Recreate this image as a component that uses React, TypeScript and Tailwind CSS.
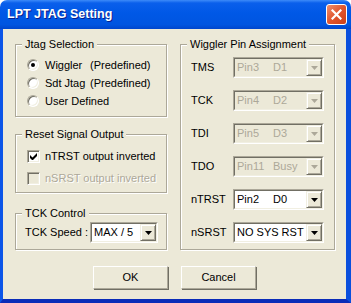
import React from "react";

const FONT = { fontFamily: '"Liberation Sans", Arial, sans-serif' };

function Arrow({ disabled }: { disabled?: boolean }) {
  return (
    <svg width="7" height="4" viewBox="0 0 7 4">
      <path d="M0 0H7L3.5 4Z" fill={disabled ? "#ACA899" : "#000"} />
    </svg>
  );
}

function Select({
  a,
  b,
  disabled,
  wide,
}: {
  a: string;
  b?: string;
  disabled?: boolean;
  wide?: boolean;
}) {
  return (
    <div
      className={
        wide
          ? "flex h-[21px] w-[91px] border border-t-[#ACA899] border-l-[#ACA899] border-b-white border-r-white"
          : "flex h-[21px] w-[68px] border border-t-[#ACA899] border-l-[#ACA899] border-b-white border-r-white"
      }
    >
      <div
        className={
          disabled
            ? "flex flex-1 items-stretch border border-t-[#716F64] border-l-[#716F64] border-b-[#F1EFE2] border-r-[#F1EFE2] bg-[#ECE9D8]"
            : "flex flex-1 items-stretch border border-t-[#716F64] border-l-[#716F64] border-b-[#F1EFE2] border-r-[#F1EFE2] bg-white"
        }
      >
        <div
          className={
            disabled
              ? "flex flex-1 items-center pl-[2px] text-[11px] leading-none text-[#ACA899] whitespace-pre"
              : "flex flex-1 items-center pl-[2px] text-[11px] leading-none text-black whitespace-pre"
          }
        >
          {b !== undefined ? (
            <>
              <span className="inline-block w-[36px]">{a}</span>
              <span>{b}</span>
            </>
          ) : (
            <span>{a}</span>
          )}
        </div>
        <div className="flex w-[16px] items-center justify-center border border-t-[#F1EFE2] border-l-[#F1EFE2] border-r-[#716F64] border-b-[#716F64] bg-[#ECE9D8] shadow-[inset_1px_1px_0_#fff,inset_-1px_-1px_0_#ACA899]">
          <Arrow disabled={disabled} />
        </div>
      </div>
    </div>
  );
}

function Group({
  label,
  className,
  children,
}: {
  label: string;
  className: string;
  children: React.ReactNode;
}) {
  return (
    <div
      className={
        "relative border border-[#ACA899] shadow-[inset_1px_1px_0_#fff,1px_1px_0_#fff] " +
        className
      }
    >
      <div className="absolute left-[6px] top-[-7px] bg-[#ECE9D8] px-[3px] text-[11px] leading-[13px] text-black">
        {label}
      </div>
      {children}
    </div>
  );
}

function Radio({ checked, a, b }: { checked?: boolean; a: string; b?: string }) {
  return (
    <div className="flex h-[18px] items-center">
      <div className="flex h-[12px] w-[12px] items-center justify-center rounded-full border border-t-[#ACA899] border-l-[#ACA899] border-b-white border-r-white bg-white shadow-[inset_1px_1px_0_#716F64,inset_-1px_-1px_0_#F1EFE2]">
        {checked && <div className="h-[4px] w-[4px] rounded-full bg-black" />}
      </div>
      <div className="ml-[6px] text-[11px] leading-none whitespace-pre">
        {b !== undefined ? (
          <>
            <span className="inline-block w-[45px]">{a}</span>
            <span>{b}</span>
          </>
        ) : (
          a
        )}
      </div>
    </div>
  );
}

function Check({ checked, disabled, label }: { checked?: boolean; disabled?: boolean; label: string }) {
  return (
    <div className="flex h-[22px] items-center">
      <div
        className={
          disabled
            ? "flex h-[13px] w-[13px] items-center justify-center border border-t-[#ACA899] border-l-[#ACA899] border-b-white border-r-white bg-[#ECE9D8] shadow-[inset_1px_1px_0_#716F64,inset_-1px_-1px_0_#F1EFE2]"
            : "flex h-[13px] w-[13px] items-center justify-center border border-t-[#ACA899] border-l-[#ACA899] border-b-white border-r-white bg-white shadow-[inset_1px_1px_0_#716F64,inset_-1px_-1px_0_#F1EFE2]"
        }
      >
        {checked && (
          <svg width="7" height="7" viewBox="0 0 7 7">
            <path d="M0 2v3l2 2h1l4-4V0L2.5 4.5Z" fill="#000" />
          </svg>
        )}
      </div>
      <div
        className={
          disabled
            ? "ml-[5px] text-[11px] leading-none text-[#ACA899] [text-shadow:1px_1px_0_#fff]"
            : "ml-[5px] text-[11px] leading-none text-black"
        }
      >
        {label}
      </div>
    </div>
  );
}

function PinRow({ label, a, b, disabled }: { label: string; a: string; b?: string; disabled?: boolean }) {
  return (
    <div className="flex h-[21px] items-center">
      <div className="w-[42px] text-[11px] leading-none">{label}</div>
      <Select a={a} b={b} disabled={disabled} wide />
    </div>
  );
}

function Button({ label }: { label: string }) {
  return (
    <div className="flex h-[23px] w-[75px] items-center justify-center border border-t-white border-l-white border-r-[#ACA899] border-b-[#ACA899] bg-[#ECE9D8] text-[11px] leading-none shadow-[1px_1px_0_#716F64]">
      {label}
    </div>
  );
}

export default function App() {
  return (
    <div className="flex h-[303px] w-[351px] flex-col bg-white text-black" style={FONT}>
      <div className="flex h-[29px] items-center justify-between rounded-t-[7px] bg-[linear-gradient(to_bottom,#3D8BF9_0px,#0A5FEB_3px,#0058E6_45%,#0055E0_85%,#0046CC_100%)] pl-[7px] pr-[4px]">
        <div className="text-[12.5px] font-bold leading-none text-white [text-shadow:1px_1px_0_#0A1E8C]">
          LPT JTAG Setting
        </div>
        <div className="flex h-[21px] w-[21px] items-center justify-center rounded-[3px] border border-white bg-[linear-gradient(135deg,#F0906E,#E0552E_50%,#CC4018)]">
          <svg width="11" height="11" viewBox="0 0 11 11">
            <path d="M1.5 1.5L9.5 9.5M9.5 1.5L1.5 9.5" stroke="#fff" strokeWidth="2.2" strokeLinecap="square" />
          </svg>
        </div>
      </div>
      <div className="flex flex-1 flex-col border-l-[3px] border-r-[5px] border-b-[4px] border-l-[#0B55E8] border-r-[#0A4FDD] border-b-[#0A2CB8] bg-[#ECE9D8]">
        <div className="flex gap-[13px] pl-[12px] pt-[15px]">
          <div className="flex w-[152px] flex-col">
            <Group label="Jtag Selection" className="h-[73px] pl-[11px] pt-[11px]">
              <Radio checked a="Wiggler" b="(Predefined)" />
              <Radio a="Sdt Jtag" b="(Predefined)" />
              <Radio a="User Defined" />
            </Group>
            <Group label="Reset Signal Output" className="mt-[17px] h-[59px] pl-[11px] pt-[10px]">
              <Check checked label="nTRST output inverted" />
              <Check disabled label="nSRST output inverted" />
            </Group>
            <Group label="TCK Control" className="mt-[20px] h-[37px] pl-[9px] pt-[8px]">
              <div className="flex h-[21px] items-center">
                <div className="w-[65px] text-[11px] leading-none">TCK Speed :</div>
                <Select a="MAX / 5" />
              </div>
            </Group>
          </div>
          <Group label="Wiggler Pin Assignment" className="flex h-[206px] w-[155px] flex-col gap-[12px] pl-[10px] pt-[12px]">
            <PinRow label="TMS" a="Pin3" b="D1" disabled />
            <PinRow label="TCK" a="Pin4" b="D2" disabled />
            <PinRow label="TDI" a="Pin5" b="D3" disabled />
            <PinRow label="TDO" a="Pin11" b="Busy" disabled />
            <PinRow label="nTRST" a="Pin2" b="D0" />
            <PinRow label="nSRST" a="NO SYS RST" />
          </Group>
        </div>
        <div className="mt-[16px] flex justify-center gap-[13px]">
          <Button label="OK" />
          <Button label="Cancel" />
        </div>
      </div>
    </div>
  );
}
